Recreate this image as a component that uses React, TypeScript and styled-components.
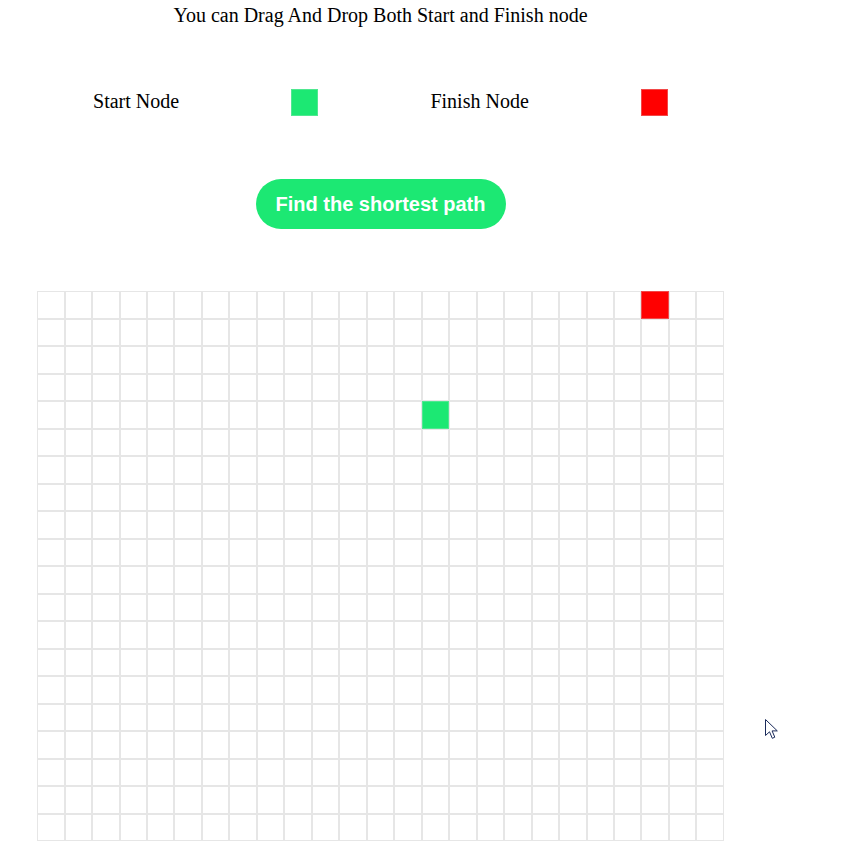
import React from 'react';
import styled, { createGlobalStyle } from 'styled-components';

const ROWS = 20;
const COLS = 25;
const START = { row: 4, col: 14 };
const FINISH = { row: 0, col: 22 };

const GlobalStyle = createGlobalStyle`
  html, body {
    margin: 0;
    padding: 0;
    background: #ffffff;
  }
  body {
    font-family: "Liberation Serif", "Times New Roman", serif;
    color: #000000;
  }
`;

const Page = styled.div`
  position: relative;
  width: 761px;
  min-height: 849px;
  padding-top: 4px;
  display: flex;
  flex-direction: column;
  align-items: center;
  gap: 62px;
`;

const Title = styled.div`
  font-size: 20px;
  line-height: 23px;
`;

const Legend = styled.div`
  width: 687px;
  height: 27px;
  margin-bottom: 1px;
  display: flex;
  justify-content: space-around;
  align-items: center;
`;

const LegendLabel = styled.span`
  font-size: 20px;
  line-height: 23px;
  margin-top: -2px;
`;

const Swatch = styled.div<{ $kind: 'start' | 'finish' }>`
  width: 27px;
  height: 27px;
  box-sizing: border-box;
  background: ${(p) => (p.$kind === 'start' ? '#1ce873' : '#ff0000')};
  border: 1px solid ${(p) => (p.$kind === 'start' ? '#4fe890' : '#f24848')};
`;

const FindButton = styled.button`
  width: 250px;
  height: 50px;
  border: none;
  border-radius: 25px;
  background: #1ce873;
  color: #ffffff;
  font-family: "Liberation Sans", Arial, sans-serif;
  font-weight: bold;
  font-size: 20px;
  cursor: pointer;
  padding: 0;
`;

const Grid = styled.div`
  display: grid;
  grid-template-columns: repeat(${COLS}, 27.48px);
  grid-auto-rows: 27.5px;
`;

const Cell = styled.div<{ $kind?: 'start' | 'finish' }>`
  box-sizing: border-box;
  border: 1px solid
    ${(p) => (p.$kind === 'start' ? '#4fe890' : p.$kind === 'finish' ? '#f24848' : '#e6e6e6')};
  background: ${(p) => (p.$kind === 'start' ? '#1ce873' : p.$kind === 'finish' ? '#ff0000' : '#ffffff')};
`;

const Pointer = styled.svg`
  position: absolute;
  left: 765px;
  top: 719px;
`;

const App: React.FC = () => {
  const cells = [];
  for (let r = 0; r < ROWS; r++) {
    for (let c = 0; c < COLS; c++) {
      let kind: 'start' | 'finish' | undefined;
      if (r === START.row && c === START.col) kind = 'start';
      if (r === FINISH.row && c === FINISH.col) kind = 'finish';
      cells.push(<Cell key={`${r}-${c}`} $kind={kind} />);
    }
  }

  return (
    <>
      <GlobalStyle />
      <Page>
        <Title>You can Drag And Drop Both Start and Finish node</Title>
        <Legend>
          <LegendLabel>Start Node</LegendLabel>
          <Swatch $kind="start" />
          <LegendLabel>Finish Node</LegendLabel>
          <Swatch $kind="finish" />
        </Legend>
        <FindButton>Find the shortest path</FindButton>
        <Grid>{cells}</Grid>
        <Pointer width="14" height="22" viewBox="0 0 14 22">
          <path
            d="M0.5 0.5 L0.5 16.5 L4.5 12.8 L7.3 19.3 L9.8 18.2 L7.1 11.9 L12.3 11.9 Z"
            fill="#ffffff"
            stroke="#1a2a5a"
            strokeWidth="1"
            strokeLinejoin="round"
          />
        </Pointer>
      </Page>
    </>
  );
};

export default App;
